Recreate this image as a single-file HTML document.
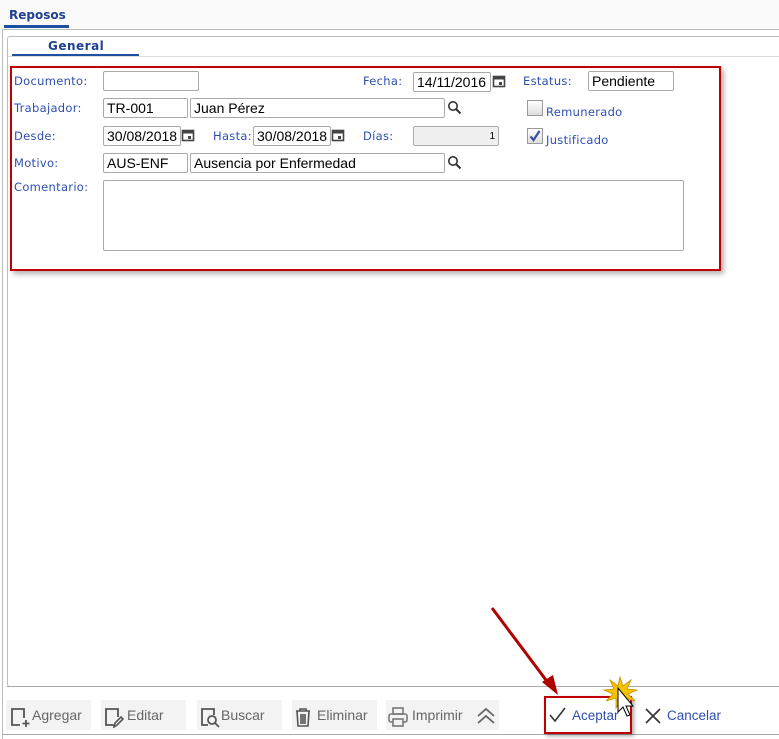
<!DOCTYPE html>
<html><head><meta charset="utf-8"><style>
*{box-sizing:border-box}
body{margin:0;width:779px;height:739px;background:#fff;position:relative;overflow:hidden;font-family:"DejaVu Sans",Verdana,sans-serif}
.a{position:absolute}
.lbl{position:absolute;font-size:11.5px;color:#2f4fb0;letter-spacing:0.3px}
.in{position:absolute;height:20px;border:1px solid #a9a9a9;border-radius:2px;background:#fff;font-family:"Liberation Sans",Arial,sans-serif;font-size:14px;color:#000;padding:1px 3px;line-height:16px;white-space:nowrap;overflow:hidden}
.btn{position:absolute;top:700px;height:30px;background:#f3f3f3;font-family:"Liberation Sans",Arial,sans-serif;font-size:14px;color:#666;line-height:31px}
</style></head><body>
<div class="a" style="left:0;top:0;width:779px;height:28px;background:#fafafa"></div>
<div class="a" style="left:9px;top:8px;font-size:12px;font-weight:bold;color:#1f3f8f">Reposos</div>
<div class="a" style="left:4px;top:25px;width:65px;height:3px;background:#1f4fa0"></div>
<div class="a" style="left:2px;top:29px;width:777px;height:1px;background:#bbb"></div>
<div class="a" style="left:2px;top:29px;width:1px;height:710px;background:#bbb"></div>
<div class="a" style="left:7px;top:36px;width:780px;height:651px;border:1px solid #bbb;border-radius:3px"></div>
<div class="a" style="left:48px;top:39px;font-size:12px;font-weight:bold;color:#1f3f8f;letter-spacing:0.5px">General</div>
<div class="a" style="left:12px;top:54px;width:127px;height:3px;background:#1f4fa0"></div>
<div class="a" style="left:8px;top:56px;width:771px;height:1px;background:#ddd"></div>
<div class="a" style="left:10px;top:66px;width:711px;height:205px;border:2px solid #c00000;box-shadow:3px 3px 5px rgba(0,0,0,0.3)"></div>

<div class="lbl" style="left:14px;top:74px">Documento:</div>
<div class="in" style="left:103px;top:71px;width:96px"></div>
<div class="lbl" style="left:363px;top:74px">Fecha:</div>
<div class="in" style="left:413px;top:72px;width:78px">14/11/2016</div>
<svg class="a" style="left:492px;top:74px" width="14" height="14"><rect x="1.5" y="2.5" width="11" height="10" fill="none" stroke="#444" stroke-width="1.6"/><rect x="1.5" y="2.5" width="11" height="3" fill="#444"/><rect x="7" y="8" width="3" height="3" fill="#444"/></svg>
<div class="lbl" style="left:523px;top:74px">Estatus:</div>
<div class="in" style="left:588px;top:71px;width:86px">Pendiente</div>

<div class="lbl" style="left:14px;top:101px">Trabajador:</div>
<div class="in" style="left:103px;top:98px;width:85px">TR-001</div>
<div class="in" style="left:190px;top:98px;width:255px">Juan Pérez</div>
<svg class="a" style="left:447px;top:100px" width="15" height="15"><circle cx="6" cy="6" r="4.2" fill="none" stroke="#333" stroke-width="1.6"/><line x1="9" y1="9" x2="13.5" y2="13.5" stroke="#333" stroke-width="2"/></svg>
<div class="a" style="left:527px;top:100px;width:16px;height:16px;border:1px solid #999;background:linear-gradient(#fff,#ddd)"></div>
<div class="lbl" style="left:546px;top:105px">Remunerado</div>

<div class="lbl" style="left:14px;top:129px">Desde:</div>
<div class="in" style="left:103px;top:126px;width:78px">30/08/2018</div>
<svg class="a" style="left:181px;top:128px" width="14" height="14"><rect x="1.5" y="2.5" width="11" height="10" fill="none" stroke="#444" stroke-width="1.6"/><rect x="1.5" y="2.5" width="11" height="3" fill="#444"/><rect x="7" y="8" width="3" height="3" fill="#444"/></svg>
<div class="lbl" style="left:213px;top:129px">Hasta:</div>
<div class="in" style="left:253px;top:126px;width:78px">30/08/2018</div>
<svg class="a" style="left:331px;top:128px" width="14" height="14"><rect x="1.5" y="2.5" width="11" height="10" fill="none" stroke="#444" stroke-width="1.6"/><rect x="1.5" y="2.5" width="11" height="3" fill="#444"/><rect x="7" y="8" width="3" height="3" fill="#444"/></svg>
<div class="lbl" style="left:363px;top:129px">Días:</div>
<div class="in" style="left:413px;top:126px;width:86px;background:#f0f0f0;font-size:10px;text-align:right;line-height:18px">1</div>
<div class="a" style="left:527px;top:128px;width:16px;height:16px;border:1px solid #999;background:linear-gradient(#fff,#ddd)"></div>
<svg class="a" style="left:528px;top:129px" width="14" height="14"><path d="M2.5 7.5 L5.5 11 L11.5 2" fill="none" stroke="#3a4f9a" stroke-width="2.2"/></svg>
<div class="lbl" style="left:546px;top:133px">Justificado</div>

<div class="lbl" style="left:14px;top:156px">Motivo:</div>
<div class="in" style="left:103px;top:153px;width:85px">AUS-ENF</div>
<div class="in" style="left:190px;top:153px;width:255px">Ausencia por Enfermedad</div>
<svg class="a" style="left:447px;top:155px" width="15" height="15"><circle cx="6" cy="6" r="4.2" fill="none" stroke="#333" stroke-width="1.6"/><line x1="9" y1="9" x2="13.5" y2="13.5" stroke="#333" stroke-width="2"/></svg>

<div class="lbl" style="left:14px;top:180px">Comentario:</div>
<div class="in" style="left:103px;top:180px;width:581px;height:71px"></div>

<div class="a" style="left:7px;top:686px;width:772px;height:1px;background:#aaa"></div>
<div class="a" style="left:2px;top:734px;width:777px;height:1px;background:#aaa"></div>

<div class="btn" style="left:6px;width:85px"><svg class="a" style="left:3px;top:6px" width="22" height="22"><path d="M11 19H3V3h12v9" fill="none" stroke="#555" stroke-width="1.8"/><path d="M17 14v7M13.5 17.5h7" stroke="#555" stroke-width="1.8"/></svg><span style="position:absolute;left:26px">Agregar</span></div>
<div class="btn" style="left:101px;width:85px"><svg class="a" style="left:2px;top:6px" width="22" height="22"><path d="M12 19H3V3h12v8" fill="none" stroke="#555" stroke-width="1.8"/><path d="M11 21l1-4 6-6 2 2-6 6z" fill="none" stroke="#555" stroke-width="1.6"/></svg><span style="position:absolute;left:26px">Editar</span></div>
<div class="btn" style="left:197px;width:85px"><svg class="a" style="left:2px;top:6px" width="22" height="22"><path d="M9 19H3V3h12v6" fill="none" stroke="#555" stroke-width="1.8"/><circle cx="13" cy="14" r="4" fill="none" stroke="#555" stroke-width="1.8"/><path d="M16 17l4 4" stroke="#555" stroke-width="1.8"/></svg><span style="position:absolute;left:24px">Buscar</span></div>
<div class="btn" style="left:292px;width:85px"><svg class="a" style="left:0;top:6px" width="22" height="22"><path d="M4 5h14M8 5V3h6v2M5 5l1 15h10l1-15M9 8v10M11 8v10M13 8v10" fill="none" stroke="#555" stroke-width="1.6"/></svg><span style="position:absolute;left:25px">Eliminar</span></div>
<div class="btn" style="left:386px;width:88px"><svg class="a" style="left:1px;top:6px" width="22" height="22"><rect x="6" y="2" width="10" height="6" fill="none" stroke="#777" stroke-width="1.6"/><rect x="2" y="8" width="18" height="8" rx="2" fill="none" stroke="#777" stroke-width="1.6"/><rect x="6" y="13" width="10" height="7" fill="#f3f3f3" stroke="#777" stroke-width="1.6"/></svg><span style="position:absolute;left:26px">Imprimir</span></div>
<div class="btn" style="left:474px;width:25px"><svg class="a" style="left:1px;top:6px" width="22" height="20"><path d="M3 10l8-7 8 7M3 17l8-7 8 7" fill="none" stroke="#666" stroke-width="1.8"/></svg></div>

<div class="a" style="left:544px;top:696px;width:88px;height:38px;border:2px solid #c00000;box-shadow:2px 2px 4px rgba(0,0,0,0.35)"></div>
<svg class="a" style="left:549px;top:706px" width="18" height="18"><path d="M1 9l5 6L16 2" fill="none" stroke="#333" stroke-width="1.6"/></svg>
<div class="a" style="left:572px;top:708px;font-family:'Liberation Sans',Arial,sans-serif;font-size:13.5px;color:#2f4fb0">Aceptar</div>
<svg class="a" style="left:644px;top:707px" width="18" height="18"><path d="M2 2l14 14M16 2L2 16" stroke="#333" stroke-width="1.6"/></svg>
<div class="a" style="left:667px;top:708px;font-family:'Liberation Sans',Arial,sans-serif;font-size:13.5px;color:#2f4fb0">Cancelar</div>

<svg class="a" style="left:480px;top:600px" width="170" height="125">
<line x1="12" y1="8" x2="72" y2="88" stroke="#b00000" stroke-width="3"/>
<path d="M62 82l16 13-5-20z" fill="#b00000"/>
<path d="M140 77l3 9 8-6-4 9 10 1-9 4 7 7-10-3 1 10-5-8-5 8 0-10-10 3 7-7-9-4 10-1-4-9 8 6z" fill="#f5c400" stroke="#c89000" stroke-width="0.8"/>
<path d="M138 88v24l5-5 4 9 3-1-4-9 7 0z" fill="#fff" stroke="#000" stroke-width="1"/>
</svg>
</body></html>
